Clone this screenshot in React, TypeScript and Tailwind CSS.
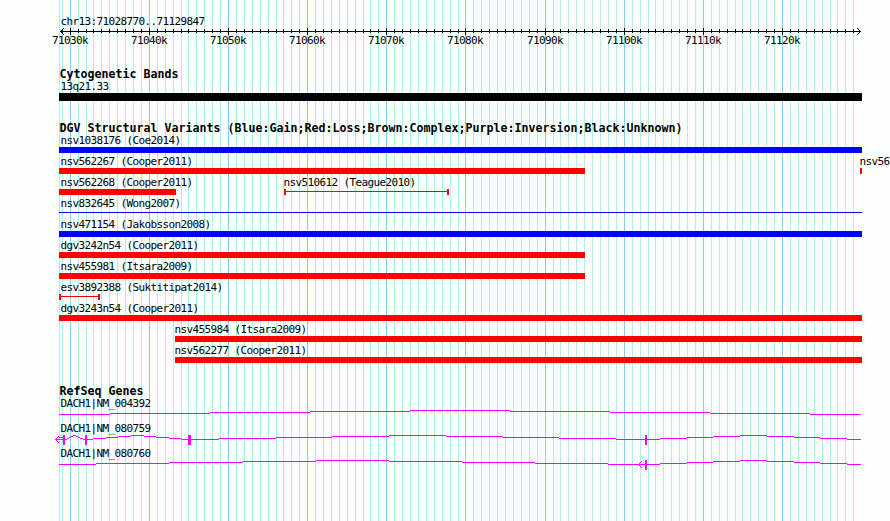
const LEFT = 59;
const RIGHT = 862;

type Feature = {
  name: string;
  start: number;
  end: number;
  color: string;
  shape?: "bar" | "span" | "line";
  labelOffset?: number;
};

type Exon = [number, number];

type Gene = {
  name: string;
  introns: number[][];
  exons: Exon[];
  arrow?: number;
};

const BLUE = "bg-[#0000ff]";
const RED = "bg-[#ff0000]";

const variantRows: Feature[][] = [
  [{ name: "nsv1038176 (Coe2014)", start: 59, end: 862, color: BLUE }],
  [
    { name: "nsv562267 (Cooper2011)", start: 59, end: 585, color: RED },
    { name: "nsv56", start: 860, end: 862, color: RED, labelOffset: -1 },
  ],
  [
    { name: "nsv562268 (Cooper2011)", start: 59, end: 176, color: RED },
    { name: "nsv510612 (Teague2010)", start: 284, end: 449, color: RED, shape: "span", labelOffset: -1 },
  ],
  [{ name: "nsv832645 (Wong2007)", start: 59, end: 862, color: BLUE, shape: "line" }],
  [{ name: "nsv471154 (Jakobsson2008)", start: 59, end: 862, color: BLUE }],
  [{ name: "dgv3242n54 (Cooper2011)", start: 59, end: 585, color: RED }],
  [{ name: "nsv455981 (Itsara2009)", start: 59, end: 585, color: RED }],
  [{ name: "esv3892388 (Suktitipat2014)", start: 59, end: 100, color: RED, shape: "span" }],
  [{ name: "dgv3243n54 (Cooper2011)", start: 59, end: 862, color: RED }],
  [{ name: "nsv455984 (Itsara2009)", start: 175, end: 862, color: RED, labelOffset: -1 }],
  [{ name: "nsv562277 (Cooper2011)", start: 175, end: 862, color: RED, labelOffset: -1 }],
];

// each intron is a list of x breakpoints, rising four pixels and falling back
const lastIntron = [647, 660, 687, 713, 740, 767, 794, 820, 847, 861];

const genes: Gene[] = [
  {
    name: "DACH1|NM_004392",
    introns: [[59, 110, 210, 310, 410, 510, 610, 710, 810, 861]],
    exons: [],
  },
  {
    name: "DACH1|NM_080759",
    introns: [
      [65, 67, 69, 71, 73, 76, 78, 80, 83, 85],
      [87, 93, 106, 118, 131, 144, 156, 169, 181, 188],
      [191, 219, 276, 332, 389, 446, 503, 559, 616, 645],
      lastIntron,
    ],
    exons: [
      [63, 65],
      [85, 87],
      [188, 191],
      [645, 647],
    ],
    arrow: 55,
  },
  {
    name: "DACH1|NM_080760",
    introns: [[59, 96, 169, 243, 316, 389, 462, 535, 608, 645], lastIntron],
    exons: [[645, 647]],
    arrow: 638,
  },
];

// one tick per kilobase, k = 0 is 71030k
const ticks = Array.from({ length: 101 }, (_, i) => i - 1).map((k) => ({
  x: Math.floor(70.22 + k * 7.915),
  major: k % 10 === 0,
  label: `${71030 + k}k`,
}));

function Grid() {
  return (
    <svg className="absolute inset-0 -z-10" width={890} height={521} shapeRendering="crispEdges">
      <rect x={LEFT} y={0} width={1} height={521} fill="#afeeee" />
      {ticks.map((t) => (
        <rect key={t.x} x={t.x} y={0} width={1} height={521} fill={t.major ? "#87ceeb" : "#afeeee"} />
      ))}
    </svg>
  );
}

function Label({ children }: { children: string }) {
  return (
    <div className="h-[13px] pl-[0.5px] text-[11px] leading-[13px] tracking-[-0.62px] whitespace-nowrap">
      {children}
    </div>
  );
}

function Title({ children }: { children: string }) {
  return (
    <h2 className="ml-[59px] h-[14px] pl-[0.5px] text-[11.63px] leading-[16px] font-bold whitespace-nowrap">
      {children}
    </h2>
  );
}

function Ruler() {
  return (
    <svg className="block" width={890} height={24} viewBox="0 26 890 24">
      <g shapeRendering="crispEdges">
        <rect x={60} y={31} width={801} height={1} />
        {ticks.map((t) => (
          <rect key={t.x} x={t.x} y={t.major ? 28 : 29} width={1} height={t.major ? 7 : 4} />
        ))}
      </g>
      <path d="M63.8 28.2L60.5 31.5l3.3 3.3M857.2 28.2l3.3 3.3-3.3 3.3" fill="none" stroke="black" />
      {ticks
        .filter((t) => t.major)
        .map((t) => (
          <text key={t.x} x={t.x - 18} y={44} className="text-[11px] tracking-[-0.62px]">
            {t.label}
          </text>
        ))}
    </svg>
  );
}

function Glyph({ feature }: { feature: Feature }) {
  const { shape = "bar", color } = feature;
  if (shape === "line") {
    return (
      <div className="h-[6px] pt-[2px]">
        <div className={`h-px ${color}`} />
      </div>
    );
  }
  if (shape === "span") {
    return (
      <div className="flex h-[6px]">
        <div className={`w-[2px] ${color}`} />
        <div className={`mt-[2px] h-px flex-1 ${color}`} />
        <div className={`w-[2px] ${color}`} />
      </div>
    );
  }
  return <div className={`h-[6px] ${color}`} />;
}

function VariantRow({ features }: { features: Feature[] }) {
  return (
    <div className="flex h-[21px]">
      {features.map((f, i) => {
        const previous = i === 0 ? 0 : features[i - 1].end;
        return (
          <div
            key={f.name}
            className="shrink-0"
            style={{ marginLeft: f.start - previous, width: f.end - f.start }}
          >
            <div style={{ marginLeft: f.labelOffset ?? 1 }}>
              <Label>{f.name}</Label>
            </div>
            <Glyph feature={f} />
          </div>
        );
      })}
    </div>
  );
}

function GeneRow({ gene }: { gene: Gene }) {
  return (
    <div className="h-[25px]">
      <div className="ml-[60px] h-[12px]">
        <Label>{gene.name}</Label>
      </div>
      <svg className="block" width={890} height={13} fill="#ff00ff" shapeRendering="crispEdges">
        {gene.introns.map((points) =>
          points.slice(1).map((x, i) => (
            <rect key={x} x={points[i]} y={5 - (4 - Math.abs(4 - i))} width={x - points[i]} height={1} />
          ))
        )}
        {gene.exons.map(([start, end]) => (
          <rect key={start} x={start} y={1} width={end - start} height={10} />
        ))}
        {gene.arrow !== undefined && (
          <>
            {[0, 1, 2, 3].map((d) => (
              <g key={d}>
                <rect x={gene.arrow! + d} y={5 - d} width={1} height={1} />
                <rect x={gene.arrow! + d} y={5 + d} width={1} height={1} />
              </g>
            ))}
            <rect x={gene.arrow} y={5} width={8} height={1} />
          </>
        )}
        {gene.arrow === 55 && <rect x={59} y={3} width={4} height={1} />}
      </svg>
    </div>
  );
}

export default function App() {
  return (
    <main className="relative isolate h-[521px] w-[890px] overflow-hidden bg-[#fdfffc] font-['DejaVu_Sans_Mono',monospace] text-black">
      <Grid />

      <header className="h-[66px] pt-[15px]">
        <div className="ml-[60px] h-[11px]">
          <Label>chr13:71028770..71129847</Label>
        </div>
        <Ruler />
      </header>

      <section className="h-[54px]">
        <Title>Cytogenetic Bands</Title>
        <div className="ml-[60px]">
          <Label>13q21.33</Label>
        </div>
        <div className="h-[8px] bg-black" style={{ marginLeft: LEFT, width: RIGHT - LEFT }} />
      </section>

      <section className="h-[263px]">
        <Title>DGV Structural Variants (Blue:Gain;Red:Loss;Brown:Complex;Purple:Inversion;Black:Unknown)</Title>
        {variantRows.map((features) => (
          <VariantRow key={features[0].name} features={features} />
        ))}
      </section>

      <section>
        <Title>RefSeq Genes</Title>
        {genes.map((gene) => (
          <GeneRow key={gene.name} gene={gene} />
        ))}
      </section>
    </main>
  );
}
